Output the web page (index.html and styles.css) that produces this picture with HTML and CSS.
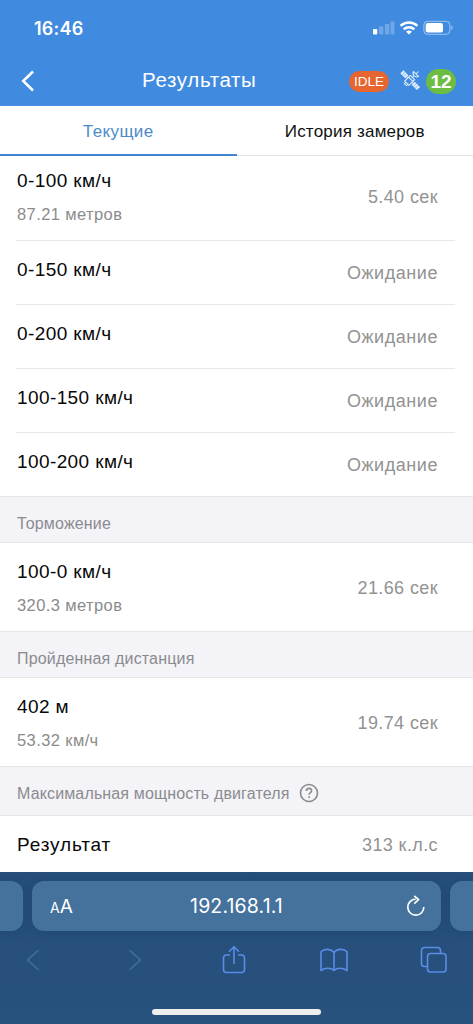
FILE: index.html
```html
<!DOCTYPE html>
<html lang="ru">
<head>
<meta charset="utf-8">
<meta name="viewport" content="width=device-width">
<title>Результаты</title>
<link rel="stylesheet" href="styles.css">
</head>
<body>
<div class="screen">
  <header class="header">
    <div class="status">
      <span class="clock">16:46</span>
      <svg class="status-icons" width="82" height="16" viewBox="0 0 82 16" fill="#fff">
        <rect x="0" y="9" width="4.3" height="5.4" rx="1"/>
        <g opacity=".25"><rect x="6" y="6.5" width="4.3" height="8" rx="1"/><rect x="12" y="4" width="4.3" height="10.5" rx="1"/><rect x="17.500" y="1.500" width="4" height="13" rx="1"/></g>
        <g fill="none" stroke="#fff" stroke-width="2.500"><path d="M27.600 5.900a12.200 12.200 0 0 1 16.800 0"/><path d="M30.700 9.300a7.700 7.700 0 0 1 10.600 0"/></g>
        <path d="M36 14.600l-2.900-2.900a4 4 0 0 1 5.800 0z"/>
        <rect x="50.900" y="1.300" width="26" height="13" rx="3.600" fill="none" stroke="#fff" stroke-opacity=".5"/>
        <rect x="52.700" y="3" width="17.300" height="9.600" rx="2"/>
        <path d="M78.300 5.500c1.700.6 1.700 3.900 0 4.500z" opacity=".5"/>
      </svg>
    </div>
    <div class="nav">
      <svg class="back" width="14" height="22" viewBox="0 0 14 22"><path d="M12 1.500 2.200 11l9.800 9.500"/></svg>
      <h1 class="title">Результаты</h1>
      <span class="idle">IDLE</span>
      <svg class="satellite" width="22" height="22" viewBox="0 0 22 22">
        <g transform="rotate(45 10 11)">
          <path d="M-1.500 8.800h7v4.400h-7zM14.500 8.800h7.500v4.400h-7.500z" fill="#fff" opacity=".85"/>
          <path d="M.8 8.800v4.400M3.100 8.800v4.400M17 8.800v4.400M19.500 8.800v4.400" stroke="#408be0" stroke-width=".5"/>
          <path d="M5.500 11h1.500M13 11h1.500M7 7.500h6v8H7zM7 10h6M10 7.500V5M6.500 2.500c.5 3.300 6.500 3.300 7 0zM10 2.500v-3.500M8.500 15.500v2h3v-2" fill="none" stroke="#fff" stroke-width="1" opacity=".9"/>
        </g>
      </svg>
      <span class="count">12</span>
    </div>
  </header>
  <nav class="tabs"><span class="tab active">Текущие</span><span class="tab history">История замеров</span></nav>
  <main class="results">
    <div class="row first"><div><div class="name">0-100 км/ч</div><div class="detail">87.21 метров</div></div><span class="value">5.40 сек</span></div>
    <div class="row short"><div class="name">0-150 км/ч</div><span class="value wait">Ожидание</span></div>
    <div class="row short"><div class="name">0-200 км/ч</div><span class="value wait">Ожидание</span></div>
    <div class="row short"><div class="name">100-150 км/ч</div><span class="value wait">Ожидание</span></div>
    <div class="row short last"><div class="name">100-200 км/ч</div><span class="value wait">Ожидание</span></div>
    <h2 class="section">Торможение</h2>
    <div class="row tall"><div><div class="name">100-0 км/ч</div><div class="detail">320.3 метров</div></div><span class="value">21.66 сек</span></div>
    <h2 class="section">Пройденная дистанция</h2>
    <div class="row tall"><div><div class="name">402 м</div><div class="detail">53.32 км/ч</div></div><span class="value">19.74 сек</span></div>
    <h2 class="section power"><span>Максимальная мощность двигателя</span>
      <svg width="20" height="20" viewBox="0 0 20 20" fill="none" stroke="#8b8b8f" stroke-width="1.600"><circle cx="10" cy="10" r="8.500"/><path d="M7.400 8c0-3.600 5.200-3.400 5.200-.3 0 1.900-2.500 1.800-2.500 4.100M10.100 13.200V15"/></svg>
    </h2>
    <div class="row result"><div class="name">Результат</div><span class="value">313 к.л.с</span></div>
  </main>
  <footer class="browser">
    <div class="address-strip">
      <div class="side left"></div>
      <div class="address">
        <span class="aa"><span class="small-a">A</span>A</span><span class="url">192.168.1.1</span>
        <svg class="reload" width="20" height="22" viewBox="0 0 20 22"><path d="M9.600 4.200A8 8 0 1 0 17.800 12M8.300.8l4.200 3.800-4.200 4"/></svg>
      </div>
      <div class="side right"></div>
    </div>
    <div class="tools">
      <svg class="dim" width="14" height="22" viewBox="0 0 14 22"><path d="M12.500 1 1.500 11l11 10"/></svg>
      <svg class="dim" width="14" height="22" viewBox="0 0 14 22"><path d="m1.500 1 11 10-11 10"/></svg>
      <svg width="24" height="30" viewBox="0 0 24 30"><path d="M8 10H4.500a3 3 0 0 0-3 3v11.500a3 3 0 0 0 3 3h15a3 3 0 0 0 3-3V13a3 3 0 0 0-3-3H16M12 19V2M7 6.700l5-5 5 5"/></svg>
      <svg width="28" height="24" viewBox="0 0 28 24"><path d="M14 4.500C11 .8 4.500.2 1 3.800V22.500c4-3 10-3 13 0 3-3 9-3 13 0V3.800C23.500.2 17 .8 14 4.500zV22.500"/></svg>
      <svg width="28" height="28" viewBox="0 0 28 28"><path d="M7 20.500H4.500a3 3 0 0 1-3-3V4.500a3 3 0 0 1 3-3h13a3 3 0 0 1 3 3V7"/><rect x="7.500" y="7.500" width="18.500" height="18.500" rx="3"/></svg>
    </div>
    <div class="home"></div>
  </footer>
</div>
</body>
</html>
```
FILE: styles.css
```css
* { box-sizing: border-box; }
body { margin: 0; font-family: "Liberation Sans", Arial, sans-serif; background: #fff; }
svg { display: block; flex: none; }
h1, h2 { margin: 0; font-weight: 400; }
.screen { width: 473px; height: 1024px; overflow: hidden; display: flex; flex-direction: column; }
.header { height: 106px; flex: none; background: #408be0; color: #fff; }
.status { height: 56px; display: flex; justify-content: space-between; padding: 20px 18px 0 34px; }
.clock { font: 600 18px/18px Inter, sans-serif; letter-spacing: .2px; }
.nav { height: 50px; display: grid; grid-template-columns: 14px 314px 51px 26px 30px; align-items: center; padding-left: 21px; }
.back path { fill: none; stroke: #fff; stroke-width: 2.500; }
.title { font-size: 20.5px; line-height: 24px; letter-spacing: .65px; padding-left: 107px; margin-top: -2px; }
.idle { height: 21px; width: 40px; border-radius: 11px; background: #e7652e; font-size: 13.500px; line-height: 21px; text-align: center; }
.satellite { margin-top: -3px; overflow: visible; }
.count { width: 30px; height: 25px; border-radius: 13px; background: #6dbd43; font-weight: 700; font-size: 19px; line-height: 26px; text-align: center; }
.tabs { height: 50px; flex: none; display: grid; grid-template-columns: 1fr 1fr; border-bottom: 1px solid #e1e1e4; }
.tab { text-align: center; font-size: 17px; line-height: 52px; color: #111; height: 50px; letter-spacing: .4px; }
.active { color: #4c8aca; border-bottom: 2px solid #4083ce; }
.history { letter-spacing: .2px; }
.row { display: flex; justify-content: space-between; margin: 0 18px 0 16px; padding: 0 17px 0 1px; border-bottom: 1px solid #e8e8e9; color: #080808; }
.name { font-size: 19px; line-height: 24px; letter-spacing: .4px; }
.detail { font-size: 16.5px; line-height: 20px; margin-top: 11px; color: #8b8b8b; letter-spacing: .4px; }
.value { font-size: 18px; line-height: 24px; color: #929292; letter-spacing: .4px; }
.wait { letter-spacing: .55px; }
.first { height: 85px; padding-top: 13px; }
.first .value, .tall .value { margin-top: 16px; }
.short { height: 64px; padding-top: 17px; }
.short .value { margin-top: 3px; }
.last, .tall, .result { border-bottom: 0; }
.last { height: 63px; }
.section { height: 47px; background: #f3f3f8; border: solid #e5e5e8; border-width: 1px 0; padding: 15px 17px 0; color: #8b8b8f; font-size: 16px; line-height: 24px; letter-spacing: .17px; }
.tall { height: 88px; padding-top: 17px; }
.power { height: 50px; display: flex; align-items: flex-start; gap: 9px; letter-spacing: .14px; }
.power svg { margin-top: 1px; }
.result { height: 56px; padding-top: 17px; }
.result .name { letter-spacing: .85px; }
.browser { height: 152px; flex: none; background: linear-gradient(#254e7a, #27517c 70%, #28527e); }
.address-strip { display: grid; grid-template-columns: 23px 409px 23px; gap: 9px; padding-top: 9px; }
.side, .address { height: 50px; background: #45729c; box-shadow: 0 2px 8px #173b6255; }
.left { border-radius: 0 12px 12px 0; }
.right { border-radius: 12px 0 0 12px; }
.address { border-radius: 12px; color: #fff; display: grid; grid-template-columns: 80px 1fr 80px; align-items: center; font-family: Inter, sans-serif; }
.aa { font-size: 19px; padding-left: 18px; }
.small-a { font-size: 14px; }
.url { font-size: 19.5px; letter-spacing: .15px; text-align: center; }
.reload { margin-left: 45px; }
.reload path { fill: none; stroke: #fff; stroke-width: 1.700; }
.tools { display: grid; grid-template-columns: 102px 94px 98px 100px 28px; align-items: center; height: 58px; padding-left: 26px; }
.tools path, .tools rect { fill: none; stroke: #5a8ce8; stroke-width: 1.600; stroke-linejoin: round; }
.tools .dim path { stroke: #426e9b; }
.home { width: 169px; height: 6px; border-radius: 3px; background: #eee; margin: 20px auto 0 152px; }
```
